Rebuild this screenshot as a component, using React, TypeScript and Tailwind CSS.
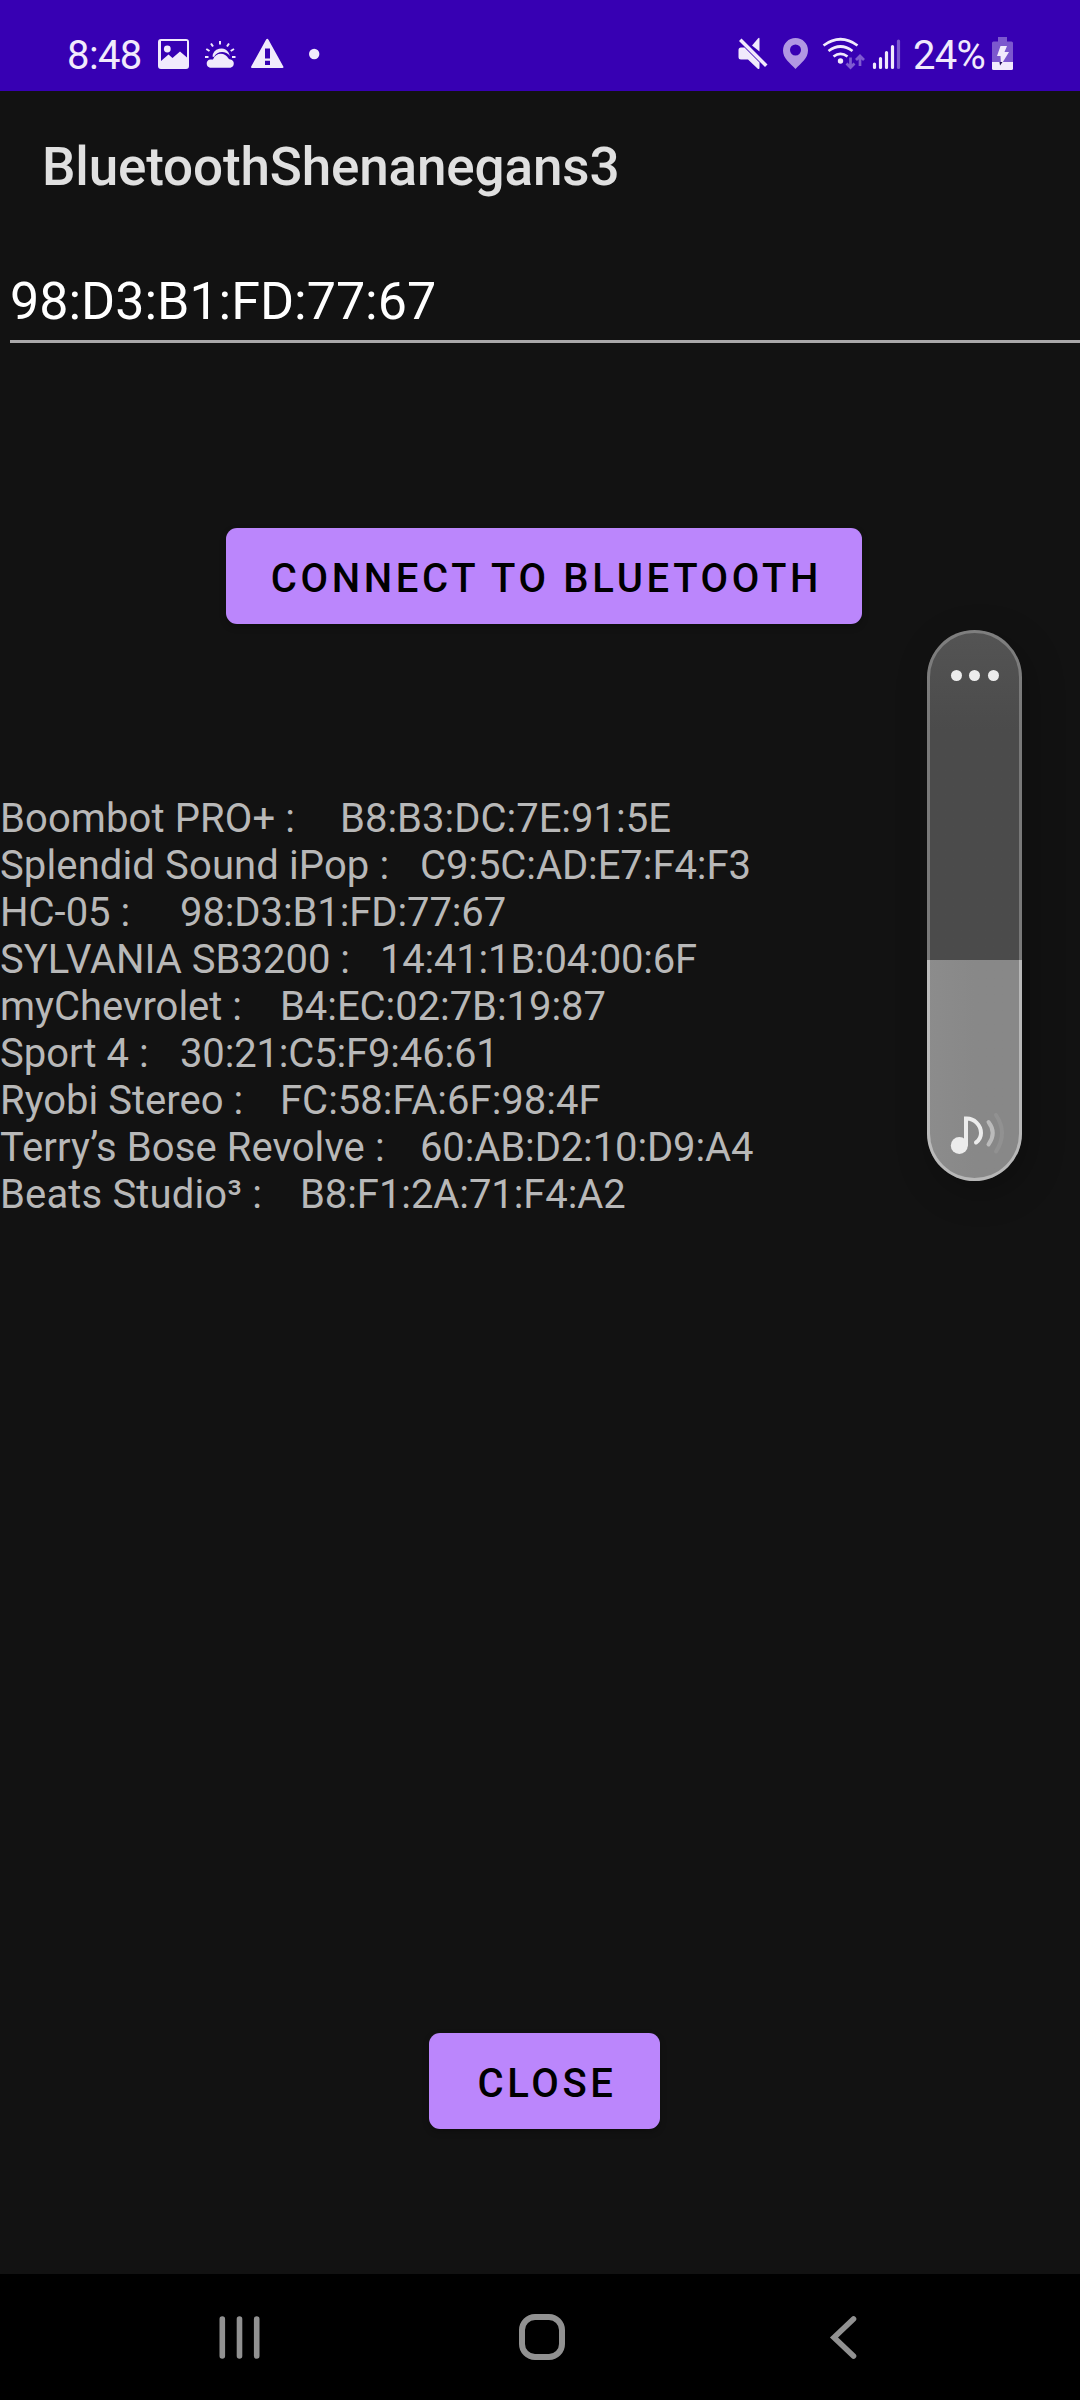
const devices = [
  { name: 'Boombot PRO+ :', address: 'B8:B3:DC:7E:91:5E', column: 'w-[340px] tracking-[0.100px]', spacing: 'tracking-normal' },
  { name: 'Splendid Sound iPop :', address: 'C9:5C:AD:E7:F4:F3', column: 'w-[420px] tracking-[0.120px]', spacing: 'tracking-[-0.080px]' },
  { name: 'HC-05 :', address: '98:D3:B1:FD:77:67', column: 'w-[180px]', spacing: 'tracking-[-0.100px]' },
  { name: 'SYLVANIA SB3200 :', address: '14:41:1B:04:00:6F', column: 'w-[380px]', spacing: 'tracking-[-0.200px]' },
  { name: 'myChevrolet :', address: 'B4:EC:02:7B:19:87', column: 'w-[280px]', spacing: 'tracking-[-0.060px]' },
  { name: 'Sport 4 :', address: '30:21:C5:F9:46:61', column: 'w-[180px]', spacing: 'tracking-[-0.160px]' },
  { name: 'Ryobi Stereo :', address: 'FC:58:FA:6F:98:4F', column: 'w-[280px]', spacing: 'tracking-normal' },
  { name: 'Terry’s Bose Revolve :', address: '60:AB:D2:10:D9:A4', column: 'w-[420px] tracking-[0.080px]', spacing: 'tracking-[-0.120px]' },
  { name: 'Beats Studio³ :', address: 'B8:F1:2A:71:F4:A2', column: 'w-[300px] tracking-[0.150px]', spacing: 'tracking-[-0.080px]' },
];

function NotificationIcons() {
  return (
    <svg className="ml-[18px] h-9 w-[164px]" viewBox="157 36 164 36" fill="#f1eafc">
      <path
        fillRule="evenodd"
        d="M161 39H186Q189 39 189 42V66Q189 69 186 69H161Q158 69 158 66V42Q158 39 161 39ZM161 41V61L168.500 54.500L172.500 58L180 51.500L187 57.500V41Z"
      />
      <circle cx="167.300" cy="49" r="3.400" />
      <path d="M212.500 56.500A8.700 8.700 0 0 1 228.500 52.500L230 56C226 50.500 217 50.500 214 57Z" />
      <path d="M210 67.700A4.200 4.200 0 0 1 210 59.500H213C215.500 52.300 225 51.800 228.500 58.500Q229.200 59.500 230.500 59.500A4.200 4.200 0 0 1 230.500 67.700Z" />
      <g stroke="#f1eafc" strokeWidth="2" fill="none">
        <path d="M220 41V44.500M211 43.500L213 46.500M229 43.500L227 46.500M206.300 49L209.500 51M234 49L230.700 51M205 57H208.500M232 57H235.500" />
      </g>
      <path
        fillRule="evenodd"
        d="M266 39.700Q267.300 38 268.500 39.700L283.300 66.500Q284 68 282.300 68H252.200Q250.500 68 251.200 66.500ZM265 48.500V58.500H270V48.500ZM265 60.700V65H270V60.700Z"
      />
      <circle cx="314.200" cy="54" r="5.200" />
    </svg>
  );
}

function SystemIcons() {
  return (
    <svg className="h-9 w-[168px]" viewBox="736 36 168 36">
      <g fill="#f1eafc">
        <path d="M752 45.500L758 38.500Q759.500 37 759.500 39V51.500Z" />
        <path d="M741 47.500H744.500L759.500 62.500V67.500Q759.500 70 757.500 68.500L748 59.500H741Q738.500 59.500 738.500 57V50Q738.500 47.500 741 47.500Z" />
        <path d="M741.500 38.500L767.500 64.500L765 67L739 41Z" />
      </g>
      <path
        fill="#b197e3"
        fillRule="evenodd"
        d="M795.500 38C788.500 38 783 43.500 783 50.500C783 58.500 790 63 795.500 69C801 63 808 58.500 808 50.500C808 43.500 802.500 38 795.500 38ZM795.500 44.500A5.500 5.500 0 1 1 795.500 55.500A5.500 5.500 0 1 1 795.500 44.500Z"
      />
      <g stroke="#f1eafc" strokeWidth="2.700" fill="none">
        <path d="M823.500 45.500Q840.500 33 857.500 45.500M828.500 51Q840.500 42 852.500 51M833.500 56.500Q840.500 51.200 847.500 56.500" />
      </g>
      <circle cx="840.500" cy="61" r="2.700" fill="#f1eafc" />
      <g stroke="#7f5bd0" strokeWidth="2.700" fill="none">
        <path d="M850.500 57.500V66.500M846.500 63.500L850.500 67.500L854.500 63.500M860 66V57M856 60L860 56L864 60" />
      </g>
      <g stroke="#f1eafc" strokeWidth="3.200" strokeLinecap="round">
        <path d="M874.500 64V67.500M880.500 58.500V67.500M886.500 52.500V67.500M892.500 46.500V67.500" />
        <path stroke="#7c58ce" d="M898.500 41V67.500" />
      </g>
    </svg>
  );
}

function BatteryIcon() {
  return (
    <svg className="ml-[5px] h-9 w-6" viewBox="991 36 24 36">
      <path fill="#7c58ce" d="M998 37H1007V41.500H1011.500Q1013 41.500 1013 43V62H992V43Q992 41.500 993.500 41.500H998Z" />
      <path fill="#f1eafc" d="M992 62H1013V68.500Q1013 70 1011.500 70H993.500Q992 70 992 68.500Z" />
      <path fill="#f1eafc" d="M1000.500 46H1007L1004.500 52H1009L1001 65L1000.500 56H997Z" />
      <path fill="#1c0a50" d="M999.500 62H1002.500L1000 65.500Z" />
    </svg>
  );
}

function StatusBar() {
  return (
    <header className="flex h-[91px] items-start bg-[#3700b3] pl-[67px] pt-9 text-[#f1eafc]">
      <span className="w-[72px] whitespace-nowrap text-[40px] leading-10 tracking-[-0.600px]">8:48</span>
      <NotificationIcons />
      <div className="ml-auto flex pr-[65px]">
        <SystemIcons />
        <span className="ml-[9px] w-[73px] whitespace-nowrap text-[40px] leading-10 tracking-[-0.700px]">24%</span>
        <BatteryIcon />
      </div>
    </header>
  );
}

function VolumeSlider() {
  return (
    <aside className="absolute left-[927px] top-[630px] flex h-[551px] w-[95px] flex-col overflow-hidden rounded-full bg-[#4c4c4c] shadow-[6px_10px_36px_rgba(0,0,0,0.25)]">
      <div className="flex flex-1 justify-center gap-[7.500px] bg-gradient-to-b from-[#545454] to-[#4b4b4b] to-30% pt-[40px]">
        <i className="size-[11px] rounded-full bg-[#ececec]" />
        <i className="size-[11px] rounded-full bg-[#ececec]" />
        <i className="size-[11px] rounded-full bg-[#ececec]" />
      </div>
      <div className="h-[221px] bg-gradient-to-r from-[#8c8c8c] to-[#888888] to-50%">
        <svg className="h-[221px] w-[95px]" viewBox="927 960 95 221" fill="none" strokeLinecap="round" strokeWidth="4">
          <circle cx="959.300" cy="1145.500" r="8.500" fill="#ececec" />
          <path stroke="#ececec" d="M966 1145V1118.500C974 1118 981 1125 981 1133Q981 1139 976 1142.500" />
          <path stroke="#bbbbbb" d="M988.500 1122Q997 1133 988.500 1144.500" />
          <path stroke="#919191" d="M996 1115Q1008 1133 996 1151.500" />
        </svg>
      </div>
      <div className="pointer-events-none absolute inset-0 rounded-full border-[3px] border-white/25" />
      <div className="pointer-events-none absolute inset-x-0 bottom-0 h-[221px] rounded-b-full border-x-[3px] border-b-[3px] border-white/20" />
    </aside>
  );
}

function NavigationBar() {
  return (
    <nav className="flex h-[126px] items-center bg-black pl-[217px]">
      <svg className="h-12 w-[45px]" viewBox="217 2313 45 48" stroke="#919191" strokeWidth="5.600" strokeLinecap="round">
        <path d="M222.300 2319V2356M239.500 2319V2356M256.700 2319V2356" />
      </svg>
      <svg className="ml-[255.500px] h-12 w-12" viewBox="517.500 2313 48 48" fill="none" stroke="#919191" strokeWidth="6">
        <rect x="521.500" y="2317" width="40" height="40" rx="13" />
      </svg>
      <svg className="ml-[263.500px] h-12 w-[30px]" viewBox="829 2313 30 48" fill="none" stroke="#919191" strokeWidth="5.600" strokeLinecap="round">
        <path d="M853.500 2319L834 2337.500L853.500 2356" />
      </svg>
    </nav>
  );
}

export default function App() {
  return (
    <div className="relative flex h-[2400px] w-[1080px] flex-col overflow-hidden bg-[#121212] font-['Roboto',sans-serif]">
      <StatusBar />
      <main className="flex flex-1 flex-col">
        <h1 className="ml-[42px] mt-[46px] h-[60px] whitespace-nowrap text-[53px] font-medium leading-[60px] tracking-[-0.150px] text-[#e0e0e0]">
          BluetoothShenanegans3
        </h1>
        <div className="ml-[10px] mt-[75px] h-[71px] border-b-[3px] border-[#aaa8aa] text-[52px] leading-[60px] text-white">
          98:D3:B1:FD:77:67
        </div>
        <button className="ml-[226px] mt-[185px] h-24 w-[636px] whitespace-nowrap rounded-[11px] bg-[#bb86fc] pl-[5px] pt-[5px] text-[40px] font-medium tracking-[3.650px] text-black shadow-[0_3px_6px_rgba(0,0,0,0.25)]">
          CONNECT TO BLUETOOTH
        </button>
        <ul className="mt-[171px] text-[40px] leading-[47px] text-[#b8b8b8]">
          {devices.map((device) => (
            <li key={device.name} className="flex whitespace-nowrap">
              <span className={device.column}>{device.name}</span>
              <span className={device.spacing}>{device.address}</span>
            </li>
          ))}
        </ul>
        <button className="mb-[145px] ml-[429px] mt-auto h-24 w-[231px] rounded-[11px] bg-[#bb86fc] pl-[5px] pt-[5px] text-[40px] font-medium tracking-[3.650px] text-black shadow-[0_3px_6px_rgba(0,0,0,0.25)]">
          CLOSE
        </button>
      </main>
      <NavigationBar />
      <VolumeSlider />
    </div>
  );
}
